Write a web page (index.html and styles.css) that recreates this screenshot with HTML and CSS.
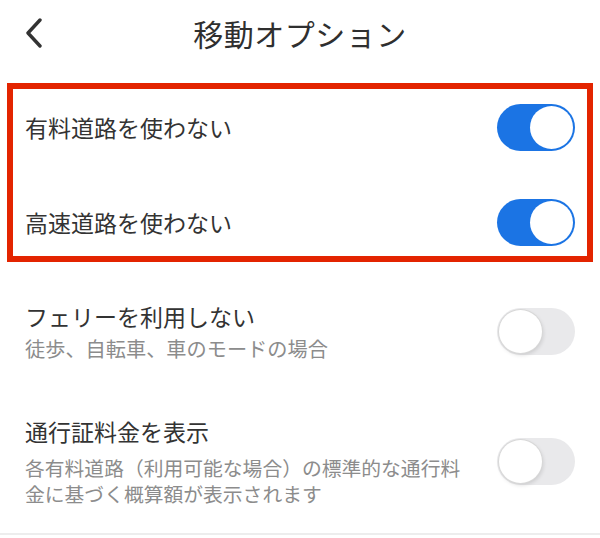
FILE: index.html
```html
<!DOCTYPE html>
<html lang="ja">
<head>
    <meta charset="utf-8">
    <title>移動オプション</title>
    <link rel="stylesheet" href="styles.css">
</head>
<body>
    <div class="topbar">
        <div class="back">
            <svg width="20" height="30" viewBox="0 0 20 30">
                <polyline points="16,2 4,15 16,28" fill="none" stroke="#333" stroke-width="3.4" stroke-linecap="round" stroke-linejoin="round"/>
            </svg>
        </div>
        <h1 class="title">移動オプション</h1>
        <div></div>
    </div>

    <!-- 強調枠 -->
    <div class="highlight">
        <div class="row">
            <div class="label">有料道路を使わない</div>
            <div class="toggle on"><span class="knob"></span></div>
        </div>
        <div class="row">
            <div class="label">高速道路を使わない</div>
            <div class="toggle on"><span class="knob"></span></div>
        </div>
    </div>

    <div class="options">
        <div class="row">
            <div class="text">
                <div class="label">フェリーを利用しない</div>
                <div class="desc">徒歩、自転車、車のモードの場合</div>
            </div>
            <div class="toggle"><span class="knob"></span></div>
        </div>
        <div class="row">
            <div class="text">
                <div class="label">通行証料金を表示</div>
                <div class="desc long">各有料道路（利用可能な場合）の標準的な通行料金に基づく概算額が表示されます</div>
            </div>
            <div class="toggle"><span class="knob"></span></div>
        </div>
    </div>
</body>
</html>
```

FILE: styles.css
```css
body {
    margin: 0;
    background: #fff;
    color: #333;
    font-family: "Noto Sans CJK JP", "Noto Sans", sans-serif;
}
.topbar {
    height: 66px;
    display: grid;
    grid-template-columns: 1fr auto 1fr;
    align-items: center;
}
.back {
    padding-left: 24px;
    display: flex;
    align-items: center;
}
.title {
    margin: 0;
    font-size: 30px;
    font-weight: 400;
    color: #2f2f2f;
    letter-spacing: 0.5px;
}
.highlight {
    margin: 17px 7px 0;
    border: 6px solid #e32400;
    padding: 4px 12px 0;
    display: flex;
    flex-direction: column;
    gap: 27px;
}
.highlight .row {
    height: 68px;
}
.row {
    display: flex;
    align-items: center;
    justify-content: space-between;
}
.label {
    font-size: 23px;
    line-height: 30px;
    color: #333;
}
.desc {
    margin-top: 5px;
    font-size: 20.2px;
    line-height: 26px;
    color: #8c8c8c;
}
.desc.long {
    margin-top: 9px;
    width: 450px;
    font-size: 19.8px;
}
.options {
    padding: 39px 25px 26px;
    display: flex;
    flex-direction: column;
    gap: 54px;
    border-bottom: 2px solid #ededed;
}
.toggle {
    position: relative;
    flex: none;
    width: 78px;
    height: 47px;
    border-radius: 24px;
    background: #e9e9eb;
}
.toggle.on {
    background: #1b74e4;
}
.knob {
    position: absolute;
    top: 2px;
    left: 2px;
    width: 43px;
    height: 43px;
    border-radius: 50%;
    background: #fff;
    box-shadow: 0 0 0 1px #d8d8d8, 1px 2px 4px rgba(0, 0, 0, 0.14);
}
.toggle.on .knob {
    left: 33px;
    box-shadow: none;
}
```
